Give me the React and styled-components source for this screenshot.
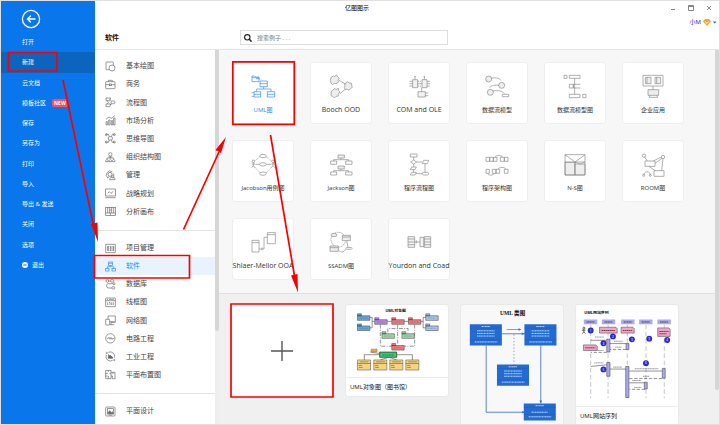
import React from "react";
import styled, { createGlobalStyle } from "styled-components";

const GlobalStyle = createGlobalStyle`
  *, *::before, *::after { box-sizing: border-box; }
  body {
    margin: 0;
    font-family: "Open Sans", "Noto Sans CJK SC", sans-serif;
    font-size: 6px;
    line-height: 10px;
    color: #333;
    background: #fff;
  }
  button, input { font: inherit; color: inherit; }
  button { border: 0; padding: 0; background: none; cursor: pointer; }
  svg { display: block; flex: none; }
`;

/* ---------- page shell ---------- */

const Page = styled.div`
  position: relative;
  display: grid;
  grid-template-columns: 94px 124px minmax(0, 1fr);
  grid-template-rows: 14px 34px minmax(0, 1fr);
  height: 100vh;
  overflow: hidden;
  border: 1px solid #dfdfdf;
  background: #fff;
`;

const TitleBar = styled.header`
  grid-area: 1 / 1 / 2 / 4;
  z-index: 1;
  display: grid;
  grid-template-columns: 1fr auto 1fr;
  align-items: center;
  padding-right: 6px;
  pointer-events: none;
`;

const AppTitle = styled.h1`
  grid-column: 2;
  margin: 0;
  font-size: 6px;
  font-weight: 400;
  color: #000;
`;

const WindowControls = styled.div`
  display: flex;
  justify-content: flex-end;
  gap: 10px;
  margin-right: -6px;
  padding-right: 6px;
  pointer-events: auto;
`;

const Sidebar = styled.nav`
  grid-area: 1 / 1 / 4 / 2;
  background: #0976ec;
  color: #fff;
`;

const BackButton = styled.button`
  display: block;
  margin: 8px 0 3px 20px;
`;

const SideList = styled.ul`
  display: grid;
  grid-auto-rows: 1fr;
  height: 243px;
  margin: 0;
  padding: 0;
  list-style: none;
`;

const SideItem = styled.button`
  display: flex;
  align-items: center;
  gap: 4px;
  width: 100%;
  height: 100%;
  padding-left: 21px;
  color: #fff;
  background: ${(p) => (p.$active ? "#0b64be" : "transparent")};
`;

const NewBadge = styled.span`
  margin-left: 2px;
  padding: 0 2px;
  border-radius: 2px;
  background: #f8515b;
  font-size: 5px;
  font-weight: 700;
  line-height: 8px;
`;

const PanelTitle = styled.h2`
  grid-area: 2 / 2 / 3 / 3;
  align-self: center;
  margin: 0;
  padding: 11px 0 0 10px;
  font-size: 7px;
  font-weight: 700;
  color: #111;
`;

const SearchBar = styled.div`
  grid-area: 2 / 3 / 3 / 4;
  display: flex;
  justify-content: space-between;
  align-items: flex-start;
  padding: 15px 2px 0 21px;
`;

const SearchBox = styled.label`
  display: flex;
  align-items: center;
  gap: 5px;
  width: 208px;
  height: 15px;
  padding-left: 3px;
  border: 1px solid #dedede;
`;

const SearchInput = styled.input`
  flex: 1;
  min-width: 0;
  border: 0;
  padding: 0;
  outline: 0;
  background: transparent;
  &::placeholder { color: #777; opacity: 1; }
`;

const UserButton = styled.button`
  display: flex;
  align-items: center;
  gap: 2px;
  height: 10px;
  margin-top: -13px;
  color: #2413f2;
`;

/* ---------- category list ---------- */

const CategoryPanel = styled.aside`
  grid-area: 3 / 2 / 4 / 3;
  display: grid;
  grid-template-columns: minmax(0, 1fr) 4px;
  overflow: hidden;
  border-top: 1px solid #e6e6e6;
`;

const CategoryScroll = styled.div`
  overflow: hidden;
  padding-top: 7px;
`;

const CategoryGroup = styled.ul`
  display: grid;
  grid-auto-rows: 1fr;
  height: ${(p) => p.$height}px;
  margin: 0;
  padding: 0;
  list-style: none;
`;

const Divider = styled.hr`
  margin: 9px 0 8px;
  border: 0;
  border-top: 1px solid #e3e3e3;
`;

const CategoryItem = styled.button`
  display: flex;
  align-items: center;
  gap: 10px;
  width: 100%;
  height: 100%;
  padding-left: 10px;
  font-size: 7px;
  color: ${(p) => (p.$active ? "#2d8cf0" : "#444")};
  background: ${(p) => (p.$active ? "#e8f3fe" : "transparent")};
  & > svg { color: ${(p) => (p.$active ? "#2d8cf0" : "#666")}; }
`;

const Track = styled.div`
  background: #efefef;
`;

const Thumb = styled.div`
  height: ${(p) => p.$size};
  border-radius: 0 0 2px 2px;
  background: #d6d6d6;
`;

/* ---------- workspace ---------- */

const Workspace = styled.main`
  grid-area: 3 / 3 / 4 / 4;
  display: grid;
  grid-template-columns: minmax(0, 1fr) 4px;
  overflow: hidden;
  border-top: 1px solid #e6e6e6;
`;

const WorkspaceScroll = styled.div`
  overflow: hidden;
  background: #f0f0f0;
`;

const TypeGrid = styled.section`
  display: grid;
  grid-template-columns: repeat(auto-fill, 62px);
  gap: 16px;
  padding: 12px 13px 13px;
  border-bottom: 1px solid #e0e0e0;
  background: #f7f7f7;
`;

const TypeCard = styled.button`
  display: flex;
  flex-direction: column;
  align-items: center;
  gap: 5px;
  height: 62px;
  padding-top: 11px;
  border: 1px solid #efefef;
  border-radius: 3px;
  background: #fff;
  color: ${(p) => (p.$active ? "#2d8cf0" : "#8a8a8a")};
`;

const TypeLabel = styled.span`
  font-size: ${(p) => (p.$latin ? 7 : 6)}px;
  white-space: nowrap;
  color: ${(p) => (p.$active ? "#2d8cf0" : "#333")};
`;

const TemplateRow = styled.section`
  display: flex;
  align-items: flex-start;
  gap: 11px;
  padding: 10px 11px;
`;

const NewTile = styled.button`
  display: grid;
  place-items: center;
  flex: none;
  width: 104px;
  height: 93px;
  background: #fff;
`;

const TemplateCard = styled.article`
  flex: none;
  width: 104px;
  overflow: hidden;
  border: 1px solid #e9e9e9;
  border-radius: 3px;
  background: ${(p) => (p.$muted ? "#f8f8f8" : "#fff")};
`;

const Caption = styled.h3`
  margin: 0;
  padding: 4px;
  border-top: 1px solid #ececec;
  font-size: 6px;
  font-weight: 400;
  color: #111;
`;

const Annotations = styled.svg`
  position: absolute;
  top: -1px;
  left: -1px;
  z-index: 2;
  pointer-events: none;
`;

/* ---------- category icons ---------- */

const glyphs = {
  basic: <><path d="M25 12V5a2 2 0 0 0-2-2H5a2 2 0 0 0-2 2v19a2 2 0 0 0 2 2h7" /><circle cx="21" cy="21" r="9" /></>,
  business: <><rect x="2" y="8" width="28" height="21" rx="2" /><path d="M10 8V4h12v4M2 17h11M19 17h11" /><rect x="13" y="15" width="6" height="5" /></>,
  flow: <><path d="M3 3h14l-3 8H3zM3 21h14l-3 8H3zM6 11l4 5-4 5M14 7l5 5M15 24l6-4" /><rect x="18" y="12" width="12" height="8" rx="4" /></>,
  market: <><path d="M3 30V20h4v10zM11 30V15h4v15zM19 30V17h4v13zM26 30V9h4v21zM3 13l9-7 7 4 10-8" /></>,
  mind: <><rect x="10" y="11" width="12" height="10" rx="3" /><path d="M3 4h7l3 7M29 4h-7l-3 7M3 28h7l3-7M29 28h-7l-3-7" /><circle cx="4" cy="5" r="3" /><circle cx="28" cy="5" r="3" /><circle cx="4" cy="27" r="3" /><circle cx="28" cy="27" r="3" /></>,
  org: <><circle cx="16" cy="7" r="5" /><path d="M16 12v6M6 21v-3h20v3" /><path d="M10 15h12M2 29c0-9 8-9 8 0zM12 29c0-9 8-9 8 0zM22 29c0-9 8-9 8 0z" /></>,
  manage: <><circle cx="15" cy="13" r="6" /><path d="M22 5A11 11 0 1 0 9 24M25 10l2 6M8 25l4-6M14 29c0-11 16-11 16 0z" /><circle cx="23" cy="20" r="4" /></>,
  strategy: <><rect x="2" y="3" width="29" height="21" /><path d="M8 16l5-5 5 5 7-6M1 29h31" /></>,
  canvas: <><rect x="2" y="4" width="29" height="24" /><path d="M8 4v17M14 4v17M20 4v17M26 4v17M2 21h29M16 21v7M14 12h6" /></>,
  project: <><rect x="2" y="4" width="29" height="25" rx="1" /><path d="M8 9v15M10 9v15M16 9v15M18 9v15M24 9v15M26 9v15" /></>,
  software: <><rect x="11" y="3" width="11" height="10" /><rect x="2" y="22" width="10" height="8" /><rect x="21" y="22" width="10" height="8" /><path d="M7 22v-5h19v5M16 13v4M11 7h11" /></>,
  database: <><circle cx="7" cy="6" r="4" /><rect x="17" y="2" width="9" height="7" rx="2" /><circle cx="27" cy="14" r="3" /><path d="M11 6h6M24 14H9a7 7 0 0 0 0 13h12" /><rect x="21" y="23" width="8" height="7" rx="2" /></>,
  wire: <><rect x="2" y="3" width="29" height="26" rx="1" /><path d="M2 11h29M6 7h3M12 7h15M8 16v8M12 16h3v8M20 16v8M25 16v8" /></>,
  network: <><path d="M9 13V3h22v19H18M14 29h14M18 22v7" /><rect x="2" y="13" width="12" height="17" rx="1" /><path d="M14 20h15" /></>,
  circuit: <><circle cx="16" cy="16" r="14" /><path d="M5 16h5l2-3 3 6 3-6 3 6 2-3h5" /></>,
  industry: <><path d="M10 4a13 13 0 0 1 18 16M23 28A13 13 0 0 1 4 12" /><path d="M10 22V11l5 4v-2l8 6v3z" fill="currentColor" /><circle cx="5" cy="6" r="2" /><circle cx="28" cy="27" r="2" /></>,
  floor: <><path d="M2 4h16v25H2zM2 13h7M13 13h5M2 21h6M10 4v5M10 21v8M18 10h12v19H22v-8h-4M24 10v6" /></>,
  graphic: <><rect x="2" y="3" width="28" height="27" rx="3" /><rect x="7" y="8" width="18" height="16" /><path d="M8 22l6-8 5 6 3-3 3 6z" fill="currentColor" /><path d="M11 27h10" /></>,
};

const CategoryIcon = ({ name }) => (
  <svg width="11" height="11" viewBox="0 0 33 33" fill="none" stroke="currentColor" strokeWidth="2" aria-hidden="true">
    {glyphs[name]}
  </svg>
);

/* ---------- diagram type icons ---------- */

const diagrams = {
  uml: <><path d="M6 6h8l3 3h10v14H6zM6 11h20" /><path d="M30 21h22v17H30zM30 29h22M41 38v7M20 52v-7h43v7M12 53h20v16H12zM52 53h22v16H52zM12 61h20M52 61h22M5 56h7M5 67h7M18 14h12" /></>,
  booch: <><g fill="#eee"><path d="M10 9l6-3 3 2 7-5 3 6 5 4-4 6 1 6-7 4-5-1-5 4-5-5-2-8z" /><path d="M50 29l5-2 3-4 7 4 6 1v7l2 5-6 4-4 5-5-3-6 1-3-6 2-5z" /><path d="M10 51l5-3 4-4 6 2 6-3 1 7 4 4-5 6 0 6-7 1-5 5-5-5-5-2z" /></g><path d="M33 19l19 11M36 60l15-14" /></>,
  com: <><g fill="#f2f2f2"><path d="M20 17h15v24H20zM48 17h15v24H48zM36 53h22v16H36z" /></g><path d="M27 7v10M55 7v10M10 22h10M10 29h10M10 36h10M35 22h5M35 29h13M35 36h5M63 22h9M63 29h9M63 36h9M47 41v12M58 57h9M58 65h9" /><circle cx="27" cy="8" r="1" /><circle cx="55" cy="8" r="1" /><path d="M42 22h3M42 36h3" /></>,
  flow: <><g fill="#eee"><circle cx="14" cy="15" r="9" /><circle cx="53" cy="34" r="9" /><circle cx="19" cy="55" r="9" /></g><path d="M23 13c12-4 24 0 28 6M45 34c-10-2-22 0-28 6M27 51c15-3 29 0 34 8" /><path d="M55 61h19v7H55z" /></>,
  flowMap: <><path d="M6 4h9v9H6zM22 4h32v9H22zM22 61h32v10H22zM62 61h10v10H62zM22 31h12v11H22z" /><path d="M38 13v48M34 31h21M34 42h21M34 31v11" /></>,
  enterprise: <><path d="M9 4h60v32H9z" /><g fill="#eee"><path d="M16 10h17v19H16zM45 10h17v19H45z" /><path d="M24 47h32v17H24z" /></g><path d="M21 10v19M50 10v19M39 36v11M30 64l-3 6h26l-3-6" /></>,
  jacobson: <><ellipse cx="39" cy="12" rx="10" ry="5" /><ellipse cx="39" cy="37" rx="10" ry="5" /><ellipse cx="39" cy="65" rx="10" ry="5" /><circle cx="10" cy="28" r="4" /><circle cx="69" cy="28" r="4" /><path d="M10 32v9l-5 6M10 41l5 6M5 36h10M69 32v9l-5 6M69 41l5 6M64 36h10M16 37h13M49 37h14" /><path strokeDasharray="3 2" d="M14 27l16-13M48 14l17 13M15 46l16 17M48 63l16-17" /></>,
  jackson: <><g fill="#eee"><path d="M30 9h19v9H30zM30 42h19v9H30z" /></g><path d="M39 18v5M17 27v-4h45v4M8 27h18v10H8zM53 27h19v10H53zM39 51v5M17 60v-4h45v4M8 60h18v9H8zM53 60h19v9H53z" /></>,
  program: <><path d="M13 6h20v9H13zM23 15v9M14 30l9-6 9 6-9 6zM32 30h17M53 25h15l-4 10H49zM23 36v9M17 45h14l-4 8H13zM23 53v8M17 61h14l-4 8H13zM30 65h19M57 35v26" /><rect x="49" y="61" width="19" height="8" rx="4" /></>,
  architecture: <><path d="M6 16h11v12H6zM17 16h11v12H17zM28 16h11v12H28zM49 16h12v12H49zM61 16h11v12H61zM6 52h10v12H6zM25 52h11v12H25zM36 52h11v12H36zM61 52h11v12H61z" /><path d="M33 15c3-6 20-6 23 0M11 64c2 7 17 7 20 0M42 51c3-6 21-6 24 0" /></>,
  ns: <><path fill="#eee" d="M9 31h30v38H9z" /><path fill="#eee" d="M39 36h30v33H39z" /><path d="M9 8h60v61H9zM9 8l30 22L69 8M9 30h60M39 30v39M39 30l15 6 15-6" /></>,
  room: <><circle cx="12" cy="11" r="5" /><circle cx="69" cy="15" r="5" /><path d="M15 27h30v16H15zM42 56h30v17H42zM14 15l8 12M64 15L40 27M66 19L45 34M69 20l-4 36M27 43l19 13M12 70v-4c4-9 15-9 19 0v4" /><circle cx="11" cy="70" r="3" /><circle cx="31" cy="70" r="3" /></>,
  shlaer: <><path d="M6 31h21v35H6zM6 38h21M52 8h24v33H52zM52 14h24M27 57h15V22h10M36 52v9" /></>,
  ssadm: <><circle cx="31" cy="29" r="22" strokeDasharray="5 2" /><ellipse cx="18" cy="15" rx="9" ry="5" fill="#eee" /><g fill="#eee"><path d="M43 16h24v16H43zM6 48h25v16H6z" /></g><path d="M43 21h24M6 53h25M56 32l4 20M31 60c8 9 16 8 22-3" /><ellipse cx="63" cy="55" rx="10" ry="3" /></>,
  yourdon: <><g fill="#f2f2f2"><path d="M6 20h20v32H6zM54 20h20v32H54zM42 22h12v28H42z" /></g><path d="M6 27h20M6 36h20M6 44h20M54 27h20M54 36h20M54 44h20M26 36h16M31 31v9" /></>,
};

const DiagramIcon = ({ name }) => (
  <svg width="26" height="26" viewBox="0 0 78 78" fill="none" stroke="currentColor" strokeWidth="2" aria-hidden="true">
    {diagrams[name]}
  </svg>
);

/* ---------- template thumbnails ---------- */

const Folder = ({ x, y, color, w = 38 }) => (
  <g transform={`translate(${x} ${y})`} fill={color} stroke="#333" strokeWidth="1.5">
    <path d={`M0 0h12v6H0zM0 6h${w}v14H0z`} />
    <path d={`M6 13h${w - 12}`} strokeDasharray="4 1" opacity=".6" />
  </g>
);

const ObjectThumb = () => (
  <svg width="100%" viewBox="0 0 312 220" aria-label="UML对象图">
    <text x="152" y="20" textAnchor="middle" fontSize="12" fontWeight="700" fill="#111">UML对象图</text>
    <g fill="none" stroke="#222" strokeWidth="1.5">
      <path d="M72 38h8v32h-8M80 50h8M126 50h14M176 50h16M228 50h8V38h10M236 50v20h10" />
      <path d="M105 60v66h38M158 60v60M210 60v66h-32M128 84v-12h62v12" strokeDasharray="12 4 3 4" />
      <path d="M104 152H56v16M154 152h49v16M129 160l-24 8M134 160l20 8M74 144l28 4" />
    </g>
    <Folder x={35} y={27} color="#69a9d8" /><Folder x={35} y={58} color="#69a9d8" />
    <Folder x={88} y={39} color="#b98af0" /><Folder x={140} y={39} color="#f47c80" /><Folder x={191} y={39} color="#f47c80" />
    <Folder x={244} y={27} color="#a7c9f2" /><Folder x={244} y={58} color="#a7c9f2" />
    <Folder x={110} y={82} color="#a3d9ad" /><Folder x={171} y={82} color="#a3d9ad" /><Folder x={140} y={118} color="#f47c80" />
    <path d="M77 135h18v8H77z" fill="#f5a623" stroke="#333" />
    <path d="M103 144h52v16h-52z" fill="#3cc878" stroke="#222" strokeWidth="2" /><path d="M111 153h36" stroke="#185c35" strokeWidth="2" strokeDasharray="5 2" />
    {[35, 85, 134, 183].map((x) => (
      <g key={x} transform={`translate(${x} 168)`} stroke="#444" strokeWidth="1.5">
        <path d="M0 0h40v31H0z" fill="#f7d37f" /><path d="M0 11h40M7 6h27M4 17h10M4 23h12" />
      </g>
    ))}
  </svg>
);

const ClassBox = ({ x, y, h = 65 }) => (
  <g transform={`translate(${x} ${y})`}>
    <path d={`M0 0h98v${h}H0z`} fill="#236bd0" />
    <path d={`M0 12h98M0 ${h - 18}h98`} stroke="#1554b0" />
    <g stroke="#b8d5fa" strokeWidth="3" strokeDasharray="5 1 3 1">
      <path d="M36 7h26" />
      {h > 60 && <path d="M22 20h54M22 28h54M22 36h54" />}
      {h <= 60 && <path d="M24 27h50" />}
      <path d={`M15 ${h - 11}h70`} />
    </g>
  </g>
);

const ClassThumb = () => (
  <svg width="100%" viewBox="0 0 312 370" aria-label="UML 类图">
    <text x="158" y="30" textAnchor="middle" fontSize="17" fontWeight="700" fontFamily='"Liberation Serif", "Noto Sans CJK SC", serif' fill="#111">UML 类图</text>
    <g fill="none" stroke="#3970bd" strokeWidth="2.5">
      <path d="M77 124v204h118M244 124v176M125 88h70" /><path d="M140 75h40" strokeWidth="2" /><path d="M162 90v92" strokeDasharray="4 6" strokeWidth="2" />
    </g>
    <path d="M186 84l9 4-9 4zM240 292l4 9 4-9zM187 324l9 4-9 4zM176 71l9 4-9 4z" fill="#3970bd" />
    <ClassBox x={27} y={59} /><ClassBox x={194} y={59} /><ClassBox x={110} y={182} /><ClassBox x={192} y={301} h={52} />
  </svg>
);

const SequenceThumb = () => (
  <svg width="100%" viewBox="0 0 312 308" aria-label="UML网站序列">
    <text x="25" y="29" fontSize="12" fontWeight="700" fill="#111">UML网站序列</text>
    <path d="M45 60v225M98 60v225M157 60v225M214 60v225M270 60v225" stroke="#a4a4b8" strokeWidth="2" strokeDasharray="14 8" />
    {[24, 79, 138, 193, 249].map((x) => (
      <g key={x}><path d={`M${x} 44h41v15h-41z`} fill="#aaa8f2" /><path d={`M${x + 8} 52h25`} stroke="#444" strokeWidth="3" strokeDasharray="4 1" /></g>
    ))}
    <g fill="#f3a4c8" stroke="#333" strokeWidth="1.5"><path d="M72 68h50l4 4v14H72zM138 68h36l4 4v14h-40zM250 70h34l4 4v22h-38zM23 122h38l4 4v13H23z" /></g>
    <path d="M78 78h41M143 78h29M255 81h28M255 88h22M28 131h31" stroke="#743c55" strokeWidth="3" strokeDasharray="5 1" />
    <g fill="none" stroke="#222" strokeWidth="2"><circle cx="24" cy="71" r="3" /><path d="M24 74v8l-5 6M24 82l5 6M18 77h11" /></g>
    <g fill="none" stroke="#222" strokeWidth="1.5">
      <path d="M45 108h49M104 118h49M45 188l49-5M104 196h49M163 202h100M163 238h48" />
      <path d="M153 136h-49M94 145H45M263 225H163M211 258h-48" strokeDasharray="10 5" />
      <path d="M58 98h27M116 111h27M120 129h20M66 139h18M56 177h28M114 190h27M180 195h72M205 218h20M172 231h27M178 252h22" strokeWidth="2" strokeDasharray="4 1" opacity=".7" />
    </g>
    <g fill="#aaa8f2" stroke="#333" strokeWidth="1.5"><path d="M94 104h10v40H94zM153 118h9v18h-9zM94 176h10v42H94zM152 188h10v95h-10zM264 194h9v30h-9zM209 236h9v21h-9z" /></g>
    {[[45, 78, 1], [113, 96, 2], [84, 117, 3], [171, 105, 3], [224, 103, 3], [279, 107, 4], [214, 178, 6], [84, 197, 5]].map(([x, y, n]) => (
      <g key={`${x}-${y}`}><circle cx={x} cy={y} r="9" fill="#2c28d0" /><text x={x} y={y + 4} fill="#fff" fontSize="10" textAnchor="middle">{n}</text></g>
    ))}
  </svg>
);

/* ---------- data ---------- */

const sideItems = ["打开", "新建", "云文档", "模板社区", "保存", "另存为", "打印", "导入", "导出 & 发送", "关闭", "选项", "退出"];

const categoryGroups = [
  { height: 164, items: [["basic", "基本绘图"], ["business", "商务"], ["flow", "流程图"], ["market", "市场分析"], ["mind", "思维导图"], ["org", "组织结构图"], ["manage", "管理"], ["strategy", "战略规划"], ["canvas", "分析画布"]] },
  { height: 145, items: [["project", "项目管理"], ["software", "软件"], ["database", "数据库"], ["wire", "线框图"], ["network", "网络图"], ["circuit", "电路工程"], ["industry", "工业工程"], ["floor", "平面布置图"]] },
  { height: 18, items: [["graphic", "平面设计"]] },
];

const types = [
  ["uml", "UML图"], ["booch", "Booch OOD"], ["com", "COM and OLE"], ["flow", "数据流模型"], ["flowMap", "数据流模型图"], ["enterprise", "企业应用"],
  ["jacobson", "Jacobson用例图"], ["jackson", "Jackson图"], ["program", "程序流程图"], ["architecture", "程序架构图"], ["ns", "N-S图"], ["room", "ROOM图"],
  ["shlaer", "Shlaer-Mellor OOA"], ["ssadm", "SSADM图"], ["yourdon", "Yourdon and Coad"],
];

const isLatin = (text) => /^[\x20-\x7e]+$/.test(text);

const ControlButton = ({ label, d }) => (
  <button type="button" aria-label={label}>
    <svg width="8" height="8" viewBox="0 0 8 8" fill="none" stroke="#777" strokeWidth="0.9"><path d={d} /></svg>
  </button>
);

export default function App() {
  return (
    <Page>
      <GlobalStyle />
      <Sidebar>
        <BackButton type="button" aria-label="返回">
          <svg width="20" height="20" viewBox="0 0 20 20" fill="none" stroke="#fff" strokeLinecap="round">
            <circle cx="10" cy="10" r="8.6" strokeWidth="1.3" />
            <path d="M14 10H6.5M9.5 7l-3 3 3 3" strokeWidth="1.3" />
          </svg>
        </BackButton>
        <SideList>
          {sideItems.map((item) => (
            <li key={item}>
              <SideItem type="button" $active={item === "新建"}>
                {item === "退出" && (
                  <svg width="6" height="6" viewBox="0 0 6 6"><circle cx="3" cy="3" r="3" fill="#fff" /><path d="M1.3 3h3.4" stroke="#0976ec" /></svg>
                )}
                {item}
                {item === "模板社区" && <NewBadge>NEW</NewBadge>}
              </SideItem>
            </li>
          ))}
        </SideList>
      </Sidebar>

      <TitleBar>
        <AppTitle>亿图图示</AppTitle>
        <WindowControls>
          <ControlButton label="最小化" d="M2 5.5h4" />
          <ControlButton label="最大化" d="M1.5 1.5h5v5h-5zM1.5 2.5h5" />
          <ControlButton label="关闭窗口" d="M2 2l4 4M6 2l-4 4" />
        </WindowControls>
      </TitleBar>

      <PanelTitle>软件</PanelTitle>
      <SearchBar>
        <SearchBox>
          <svg width="8" height="8" viewBox="0 0 8 8" fill="none" stroke="#222" strokeWidth="1.1"><circle cx="3.3" cy="3.3" r="2.7" /><path d="M5.3 5.3l2.3 2.3" strokeWidth="1.5" /></svg>
          <SearchInput type="search" aria-label="搜索例子" placeholder="搜索例子 . . ." />
        </SearchBox>
        <UserButton type="button">
          小M
          <svg width="8" height="7" viewBox="0 0 8 7"><path d="M2 0h4l2 2.5L4 7 0 2.5z" fill="#f5a52a" /><path d="M2.2 2.6L4 4.4l1.8-1.8" fill="none" stroke="#fff" /></svg>
          <svg width="4" height="3" viewBox="0 0 4 3"><path d="M0 .5h3.4L1.7 2.5z" fill="#1763b8" /></svg>
        </UserButton>
      </SearchBar>

      <CategoryPanel>
        <CategoryScroll>
          {categoryGroups.map((group, index) => (
            <React.Fragment key={group.height}>
              {index > 0 && <Divider />}
              <CategoryGroup $height={group.height}>
                {group.items.map(([icon, label]) => (
                  <li key={icon}>
                    <CategoryItem type="button" $active={icon === "software"}>
                      <CategoryIcon name={icon} />
                      {label}
                    </CategoryItem>
                  </li>
                ))}
              </CategoryGroup>
            </React.Fragment>
          ))}
        </CategoryScroll>
        <Track><Thumb $size="75%" /></Track>
      </CategoryPanel>

      <Workspace>
        <WorkspaceScroll>
          <TypeGrid>
            {types.map(([icon, label]) => (
              <TypeCard type="button" key={icon} $active={icon === "uml"}>
                <DiagramIcon name={icon} />
                <TypeLabel $latin={isLatin(label)} $active={icon === "uml"}>{label}</TypeLabel>
              </TypeCard>
            ))}
          </TypeGrid>
          <TemplateRow>
            <NewTile type="button" aria-label="新建空白绘图">
              <svg width="22" height="22" viewBox="0 0 22 22" stroke="#555" strokeWidth="1.4"><path d="M0 11h22M11 1v20" /></svg>
            </NewTile>
            <TemplateCard><ObjectThumb /><Caption>UML对象图（图书馆）</Caption></TemplateCard>
            <TemplateCard $muted><ClassThumb /></TemplateCard>
            <TemplateCard><SequenceThumb /><Caption>UML网站序列</Caption></TemplateCard>
          </TemplateRow>
        </WorkspaceScroll>
        <Track><Thumb $size="91%" /></Track>
      </Workspace>

      <Annotations width="720" height="425" viewBox="0 0 720 425" fill="none" stroke="#f90000" strokeWidth="1.7" aria-hidden="true">
        <path d="M8.500 52.500h48.500v18.500H8.500zM94.500 255.500h95v22.500h-95zM232.800 61.800h61.500v62.500h-61.500zM231 304h102v93H231z" />
        <path d="M63 80L94 228M183.500 229.500L219 152M270.500 135L294.500 276" />
        <path d="M98 242l-7-18 6.500-1.500zM226 137l-10.500 13 5.500 3zM298 292.500l-7-17 6.500-1.500z" fill="#f90000" stroke="none" />
      </Annotations>
    </Page>
  );
}
